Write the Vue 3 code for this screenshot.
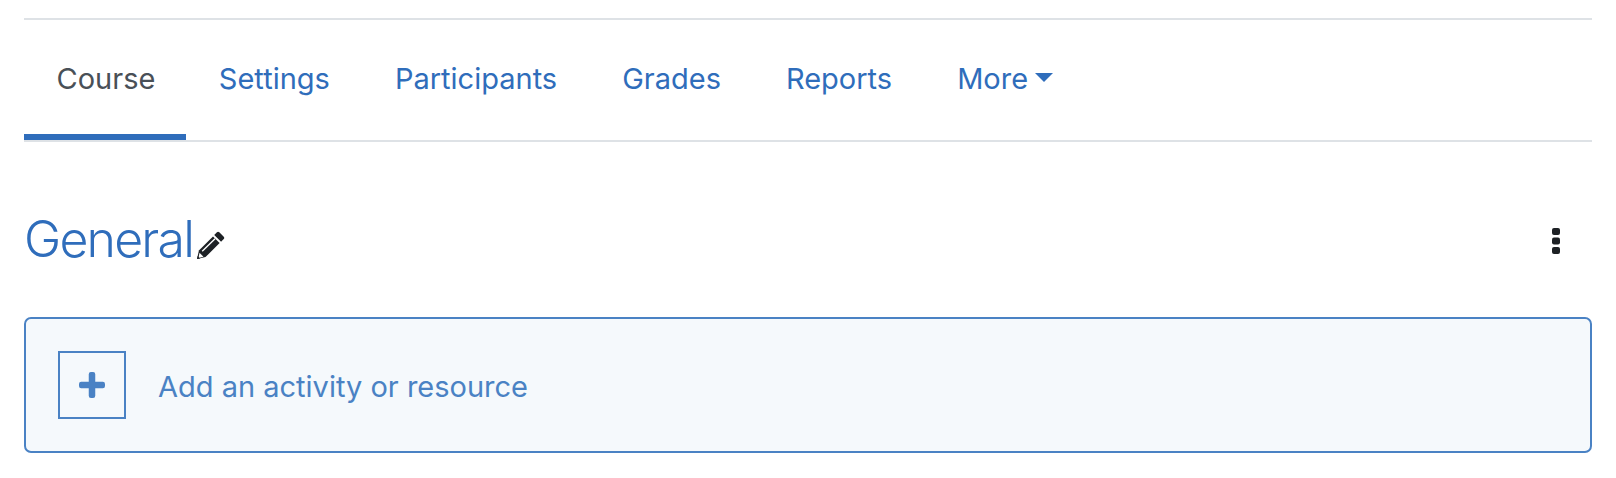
<template>
  <div class="page">
    <nav class="tabs">
      <a
        v-for="tab in tabs"
        :key="tab"
        class="tab"
        :class="{ active: tab === 'Course' }"
      >{{ tab }}</a>
      <a class="tab">More<span class="caret"></span></a>
    </nav>

    <div class="section-head">
      <h2 class="section-title">General</h2>
      <svg class="pencil" viewBox="0 0 28 28" aria-hidden="true">
        <path d="M20.2 1.2a1.6 1.6 0 0 1 2.3 0l4.3 4.3a1.6 1.6 0 0 1 0 2.3l-2.6 2.6-6.6-6.6z" fill="#1d2125" />
        <path d="M16.4 5.2l6.4 6.4L9.2 25.2 1 27l1.8-8.2z" fill="#1d2125" />
        <path d="M6 19.6L18.4 7.4" stroke="#fff" stroke-width="1.3" fill="none" />
        <path d="M3.4 21l3.8 3.8L2.4 26z" fill="#fff" />
        <path d="M1.6 24.2l2.4 2.4L1 27z" fill="#1d2125" />
      </svg>
      <svg class="dots" viewBox="0 0 8 26" aria-hidden="true">
        <rect x="0" y="0" width="8" height="7" rx="2" />
        <rect x="0" y="9.5" width="8" height="7" rx="2" />
        <rect x="0" y="19" width="8" height="7" rx="2" />
      </svg>
    </div>

    <div class="add-box">
      <span class="plus-box">
        <svg class="plus" viewBox="0 0 24 24" aria-hidden="true">
          <path d="M9 2a2 2 0 0 1 2-2h2a2 2 0 0 1 2 2v7h7a2 2 0 0 1 2 2v2a2 2 0 0 1-2 2h-7v7a2 2 0 0 1-2 2h-2a2 2 0 0 1-2-2v-7H2a2 2 0 0 1-2-2v-2a2 2 0 0 1 2-2h7z" />
        </svg>
      </span>
      <span class="add-label">Add an activity or resource</span>
    </div>
  </div>
</template>

<script setup>
const tabs = ['Course', 'Settings', 'Participants', 'Grades', 'Reports']
</script>

<style scoped>
.page {
  box-sizing: border-box;
  width: 1616px;
  height: 478px;
  padding: 18px 24px 0;
  background: #fff;
  font-family: Inter, "Liberation Sans", sans-serif;
}
.tabs {
  display: flex;
  height: 120px;
  border-top: 2px solid #dee2e6;
  border-bottom: 2px solid #dee2e6;
}
.tab {
  display: flex;
  align-items: center;
  box-sizing: border-box;
  padding: 0 32.5px 4px;
  font-size: 29px;
  color: #2f6dbb;
}
.tab.active {
  color: #495057;
  border-bottom: 6px solid #2f6dbb;
  padding-top: 2px;
  padding-bottom: 0;
  padding-right: 31px;
}
.caret {
  width: 0;
  height: 0;
  margin-left: 7px;
  margin-bottom: 2px;
  border-left: 9px solid transparent;
  border-right: 9px solid transparent;
  border-top: 9px solid #2f6dbb;
}
.section-head {
  display: flex;
  align-items: center;
  height: 50px;
  margin: 72px 0 53px;
  padding-right: 32px;
}
.section-title {
  margin: 0;
  font-size: 50px;
  font-weight: 300;
  line-height: 50px;
  letter-spacing: -1.8px;
  color: #2f6dbb;
}
.pencil {
  width: 29px;
  height: 29px;
  margin: 13px 0 0 3px;
}
.dots {
  width: 8px;
  height: 26px;
  margin: 4px 0 0 auto;
  fill: #1d2125;
}
.add-box {
  display: flex;
  align-items: center;
  box-sizing: border-box;
  height: 136px;
  padding-left: 32px;
  border: 2px solid #4a82c4;
  border-radius: 7px;
  background: #f5f9fc;
}
.plus-box {
  display: flex;
  align-items: center;
  justify-content: center;
  box-sizing: border-box;
  width: 68px;
  height: 68px;
  border: 2px solid #4a82c4;
}
.plus {
  width: 26px;
  height: 26px;
  fill: #4a82c4;
}
.add-label {
  margin-left: 32px;
  padding-top: 2px;
  font-size: 29px;
  color: #4a82c4;
}
</style>
